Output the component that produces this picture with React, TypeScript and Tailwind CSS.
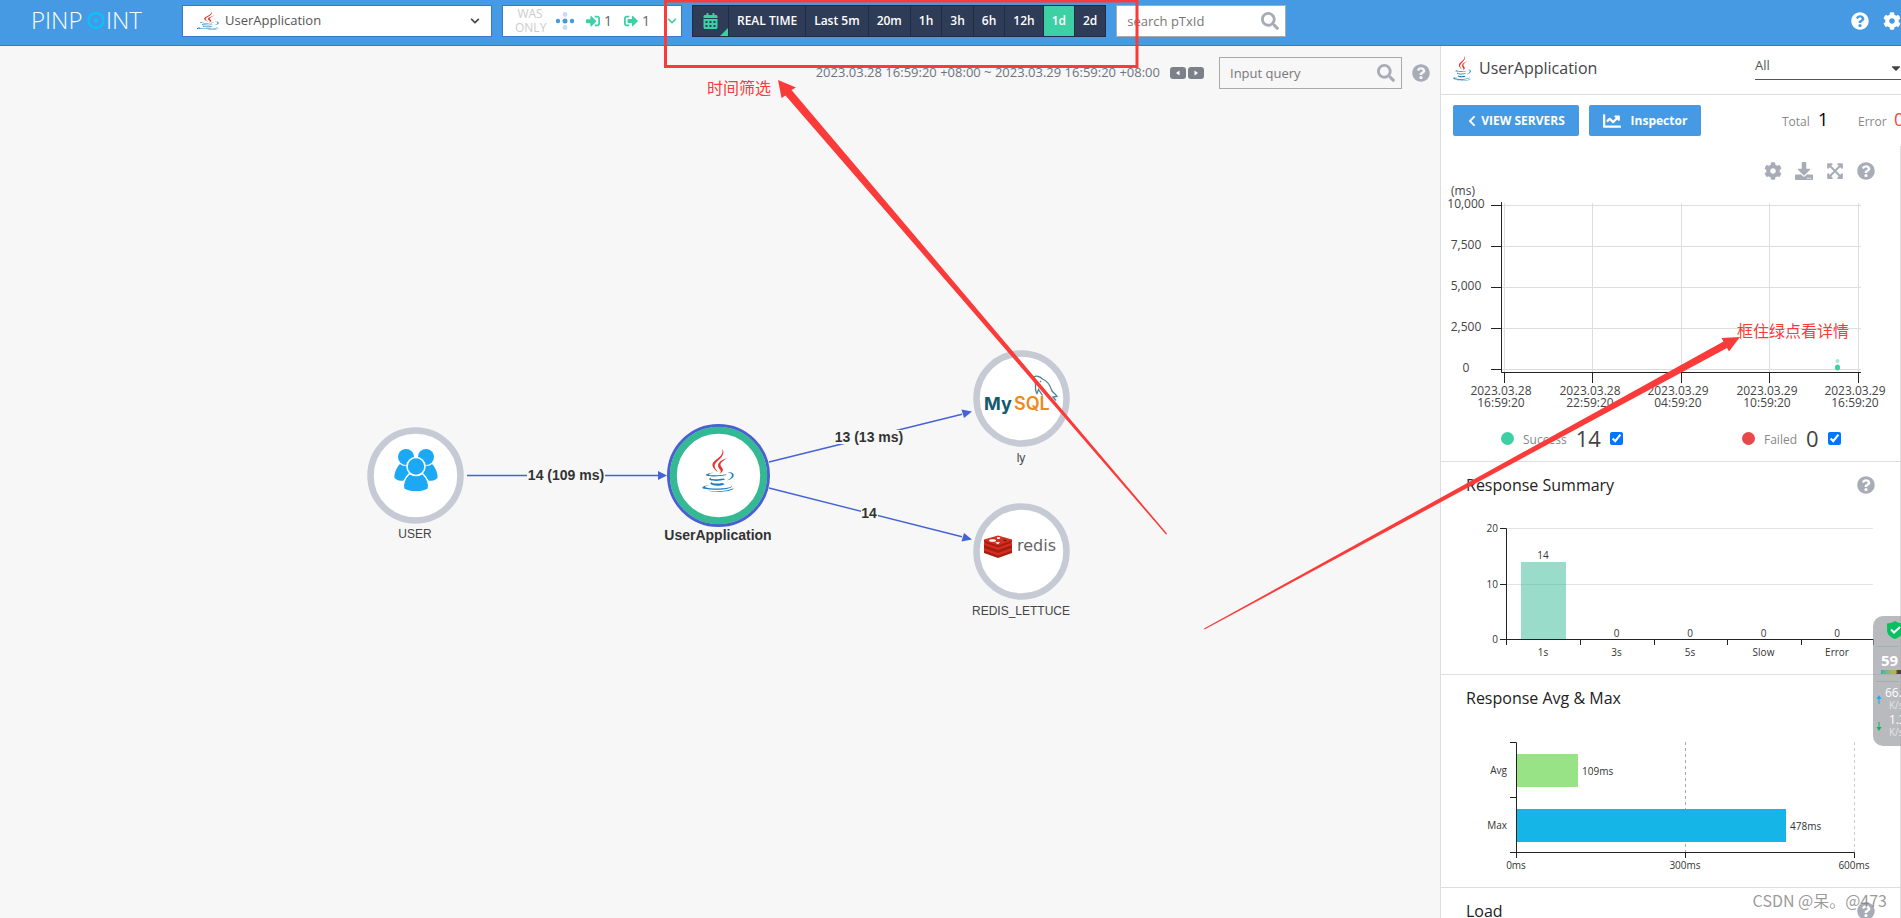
import type { ReactNode } from 'react';
import {
  FaCalendarAlt,
  FaCaretDown,
  FaChartLine,
  FaChevronDown,
  FaChevronLeft,
  FaCog,
  FaDownload,
  FaExpandArrowsAlt,
  FaQuestionCircle,
  FaSearch,
  FaSignInAlt,
  FaSignOutAlt,
} from 'react-icons/fa';

const periods = ['REAL TIME', 'Last 5m', '20m', '1h', '3h', '6h', '12h', '1d', '2d'];

const JavaPaths = () => (
  <>
    <path
      fill="#1a7fc1"
      d="M47.617 98.12s-4.767 2.774 3.397 3.71c9.892 1.13 14.947.968 25.845-1.092 0 0 2.871 1.795 6.873 3.351-24.439 10.47-55.308-.607-36.115-5.969zm-2.988-13.665s-5.348 3.959 2.823 4.805c10.567 1.091 18.91 1.18 33.354-1.6 0 0 1.993 2.025 5.132 3.131-29.542 8.64-62.446.68-41.309-6.336z"
    />
    <path
      fill="#e8322e"
      d="M69.802 61.271c6.025 6.935-1.58 13.17-1.58 13.17s15.289-7.891 8.269-17.777c-6.559-9.215-11.587-13.792 15.635-29.58 0 .001-42.731 10.67-22.324 34.187z"
    />
    <path
      fill="#1a7fc1"
      d="M102.123 108.229s3.529 2.91-3.888 5.159c-14.102 4.272-58.706 5.56-71.094.171-4.451-1.938 3.899-4.625 6.526-5.192 2.739-.593 4.303-.485 4.303-.485-4.953-3.487-32.013 6.85-13.743 9.815 49.821 8.076 90.817-3.637 77.896-9.468zM49.912 70.294s-22.686 5.389-8.033 7.348c6.188.828 18.518.638 30.011-.326 9.39-.789 18.813-2.474 18.813-2.474s-3.308 1.419-5.704 3.053c-23.042 6.061-67.544 3.238-54.731-2.958 10.832-5.239 19.644-4.643 19.644-4.643zm40.697 22.747c23.421-12.167 12.591-23.86 5.032-22.285-1.848.385-2.677.72-2.677.72s.688-1.079 2-1.543c14.953-5.255 26.451 15.503-4.823 23.725 0-.002.359-.327.468-.617z"
    />
    <path
      fill="#e8322e"
      d="M76.491 1.587S89.459 14.563 64.188 34.51c-20.266 16.006-4.621 25.13-.007 35.559-11.831-10.673-20.509-20.07-14.688-28.815C58.041 28.42 81.722 22.195 76.491 1.587z"
    />
    <path
      fill="#1a7fc1"
      d="M52.214 126.021c22.476 1.437 57-.8 57.817-11.436 0 0-1.571 4.032-18.577 7.231-19.186 3.612-42.854 3.191-56.887.874 0 .001 2.875 2.381 17.647 3.331z"
    />
  </>
);

const JavaIcon = ({ className }: { className: string }) => (
  <svg className={className} viewBox="17 1 94 126" preserveAspectRatio="none" aria-hidden="true">
    <JavaPaths />
  </svg>
);

const Logo = () => (
  <a href="#home" className="flex w-[150px] items-center" aria-label="PINPOINT">
    <svg width="130" height="40" viewBox="0 0 130 40">
      <g fill="#fff" fontFamily="'Open Sans', sans-serif" fontSize="24" fontWeight="300">
        <text x="-1" y="28">PINP</text>
        <text x="74" y="28">INT</text>
      </g>
      <circle cx="64" cy="19.5" r="7.5" fill="none" stroke="#00c8ff" strokeWidth="2" />
      <circle cx="64" cy="19.5" r="2" fill="#00c8ff" />
    </svg>
  </a>
);

const Header = () => (
  <header className="flex h-[46px] shrink-0 items-center overflow-hidden border-b border-[#3a79c9] bg-[#469ae4] pb-[3px] pl-8">
    <Logo />

    <div className="relative flex h-8 w-[310px] items-center">
      <JavaIcon className="pointer-events-none absolute left-[15px] h-[18px] w-[22px]" />
      <select
        aria-label="Application"
        className="h-8 w-full appearance-none border border-[#3a79c9] bg-white pl-[42px] text-[13px] text-[#555]"
      >
        <option>UserApplication</option>
      </select>
      <FaChevronDown className="pointer-events-none absolute right-3 h-[10px] w-[10px] text-[#444]" />
    </div>

    {/* Server map options */}
    <div className="ml-[10px] flex h-8 w-[180px] items-center border border-[#3a79c9] bg-white pl-3 text-[#666]">
      <button className="w-[30px] text-center text-xs leading-[14px] text-[#ccc]">WAS ONLY</button>
      <svg className="ml-[11px]" width="18" height="18" viewBox="0 0 18 18">
        <circle cx="2" cy="9" r="2.2" fill="#469ae4" />
        <circle cx="9" cy="9" r="2.5" fill="#469ae4" />
        <circle cx="16" cy="9" r="2.2" fill="#469ae4" />
        <circle cx="9" cy="2.5" r="2.4" fill="#c6dbfb" />
        <circle cx="9" cy="15.5" r="2.4" fill="#c6dbfb" />
      </svg>
      <FaSignInAlt className="ml-3 h-[14px] w-[14px] text-[#3ed0a5]" />
      <span className="ml-1 w-3 text-sm">1</span>
      <FaSignOutAlt className="ml-2 h-[14px] w-[14px] text-[#3ed0a5]" />
      <span className="ml-1 w-3 text-sm">1</span>
      <FaChevronDown className="mr-1 ml-auto h-[10px] w-[10px] text-[#3ed0a5]" />
    </div>

    {/* Period selector */}
    <div className="ml-[10px] flex h-8 border border-[#1f2c45] bg-[#2f3c58] text-xs font-semibold text-white">
      <button className="relative flex w-[35px] items-center justify-center" aria-label="Calendar">
        <FaCalendarAlt className="h-[16px] w-[15px] text-[#3ed0a5]" />
        <svg className="absolute right-0 bottom-0" width="8" height="8" viewBox="0 0 8 8">
          <path d="M8 0v8H0z" fill="#3ed0a5" />
        </svg>
      </button>
      {periods.map((p) => (
        <button
          key={p}
          className={`border-l border-[#1f2c45] px-2 ${p === '1d' ? 'bg-[#3ed0a5]' : ''}`}
        >
          {p}
        </button>
      ))}
    </div>

    <div className="relative ml-[10px] flex h-8 w-[170px] items-center">
      <input
        aria-label="search pTxId"
        placeholder="search pTxId"
        className="h-8 w-full border border-[#aaa] bg-white pl-[10px] text-[13px] placeholder-[#777]"
      />
      <FaSearch className="absolute right-[7px] h-[18px] w-[18px] text-[#a7acb7]" />
    </div>

    <div className="ml-auto flex items-center gap-[14px] text-white">
      <FaQuestionCircle className="h-[18px] w-[18px]" />
      <FaCog className="h-[18px] w-[18px]" />
    </div>
  </header>
);

/* Topology: USER -> UserApplication -> MySQL / Redis */
const ServerMap = () => (
  <svg width="724" height="290" viewBox="358 337 724 290" fontFamily="'Liberation Sans', Arial, sans-serif">
    <path d="M467 476.5H660M769 463L962 415.2M769 489L962 537.8" fill="none" stroke="#4663d6" strokeWidth="1.4" />
    <g fill="#4663d6">
      <path d="M667 476.5l-9-4.5v9z" />
      <path d="M972 412.5l-10.500-2 2.500 8.500z" />
      <path d="M972 540.5l-8-6.500-2.500 8.500z" />
    </g>

    <g fill="#f7f7f7">
      <rect x="527" y="468" width="78" height="16" />
      <rect x="834" y="431" width="70" height="14" />
      <rect x="861" y="506" width="17" height="14" />
    </g>
    <g fill="#333" fontSize="14" fontWeight="bold" textAnchor="middle">
      <text x="566" y="481">14 (109 ms)</text>
      <text x="869" y="443">13 (13 ms)</text>
      <text x="869" y="519">14</text>
      <text x="718" y="541">UserApplication</text>
    </g>
    <g fill="#444" fontSize="12" textAnchor="middle">
      <text x="415" y="539">USER</text>
      <text x="1021" y="463">ly</text>
      <text x="1021" y="616">REDIS_LETTUCE</text>
    </g>

    <g fill="#fff" stroke="#c5cad5" strokeWidth="6.5">
      <circle cx="415.5" cy="476.5" r="45" />
      <circle cx="1021.5" cy="399.5" r="45" />
      <circle cx="1021.5" cy="552.5" r="45" />
    </g>
    <circle cx="718.5" cy="476.5" r="50" fill="#fff" stroke="#4b5ed3" strokeWidth="3" />
    <circle cx="718.5" cy="476.5" r="45.2" fill="#fff" stroke="#34b994" strokeWidth="7" />

    {/* users */}
    <g fill="#1ba9f5">
      <circle cx="406" cy="458" r="8" />
      <circle cx="426" cy="458" r="8" />
      <path d="M400 465c-4 4-6 10-5.5 14 3 3 8 3.5 13 2l3-11-3-4c-3 1.5-5 1-7.5-1z" />
      <path d="M432 465c4 4 6 10 5.5 14-3 3-8 3.5-13 2l-3-11 3-4c3 1.5 5 1 7.5-1z" />
      <g stroke="#fff" strokeWidth="1.6">
        <path d="M409 475c-4 4-6.5 10-5.5 15 6 4 19 4 25 0 1-5-1.5-11-5.5-15z" />
        <circle cx="416" cy="467.5" r="9" />
      </g>
    </g>

    <svg x="702" y="450" width="32" height="43" viewBox="17 1 94 126">
      <JavaPaths />
    </svg>

    {/* mysql */}
    <g fontFamily="Inter, 'Open Sans', sans-serif" fontSize="18">
      <text x="984" y="411" fill="#14596d" fontWeight="700">My</text>
      <text x="1014" y="411" fill="#ee8a1d" fontWeight="600">SQL</text>
    </g>
    <path
      d="M1034 378c2-2 6-.5 8.500 2 4 1.500 7.500 6 9.500 12 2 2.500 4.500 4 5 5.500l-4 .5 3 3.500M1034 378c-1 2 1 4 1.500 7 0 4-.5 7 1.500 9.500l1.500-4 4 6M1040 382l1 1"
      fill="none"
      stroke="#4b8292"
      strokeWidth="1.3"
    />

    {/* redis */}
    <path d="M984 551v3l14 5 14-5v-3z" fill="#a41e11" />
    <path d="M984 549l14-5 14 5v2.500l-14 5-14-5z" fill="#d82c20" />
    <path d="M984 546v3l14 5 14-5v-3z" fill="#a41e11" />
    <path d="M984 544l14-5 14 5v2l-14 5-14-5z" fill="#d82c20" />
    <path d="M984 541v2.500l14 5 14-5V541z" fill="#a41e11" />
    <path d="M984 540.500l14-4 14 4v1l-14 5-14-5z" fill="#d82c20" />
    <ellipse cx="992.500" cy="541.500" rx="3.500" ry="1.300" fill="#fff" />
    <ellipse cx="998.500" cy="539" rx="1.800" ry=".9" fill="#fff" />
    <path d="M995 543.500l5-.5-2 2.200z" fill="#fff" />
    <path d="M1003 540.500l4 .7-2.500 1.300z" fill="#6d1109" />
    <text x="1017" y="552" fill="#636466" fontSize="16" fontFamily="'DejaVu Sans', sans-serif">
      redis
    </text>
  </svg>
);

const MapArea = () => (
  <main className="flex min-w-0 flex-1 flex-col">
    <div className="flex h-[54px] shrink-0 items-center justify-end pr-[10px] text-[#7c8089]">
      <span className="text-[13px] font-medium text-[#6f737c]">
        2023.03.28 16:59:20 +08:00 ~ 2023.03.29 16:59:20 +08:00
      </span>
      <button className="ml-[10px]" aria-label="Previous period">
        <svg className="block" width="16" height="12" viewBox="0 0 16 12">
          <rect width="16" height="12" rx="3" fill="#7c8089" />
          <path d="M9.500 3.500v5L6 6z" fill="#fff" />
        </svg>
      </button>
      <button className="ml-[2px]" aria-label="Next period">
        <svg className="block" width="16" height="12" viewBox="0 0 16 12">
          <rect width="16" height="12" rx="3" fill="#7c8089" />
          <path d="M6.500 3.500v5L10 6z" fill="#fff" />
        </svg>
      </button>
      <div className="relative ml-[15px] flex h-8 w-[183px] items-center">
        <input
          aria-label="Input query"
          placeholder="Input query"
          className="h-8 w-full border border-[#aaa] pl-[10px] text-[13px] placeholder-[#777]"
        />
        <FaSearch className="absolute right-[7px] h-[18px] w-[18px] text-[#a7acb7]" />
      </div>
      <FaQuestionCircle className="ml-[10px] h-[18px] w-[18px] text-[#a7acb7]" />
    </div>
    <div className="flex flex-1 items-center justify-center pb-14">
      <ServerMap />
    </div>
  </main>
);

const scatterX = [
  { x: 63.5, label: 60, day: '2023.03.28', time: '16:59:20' },
  { x: 151.5, label: 149, day: '2023.03.28', time: '22:59:20' },
  { x: 240.5, label: 237, day: '2023.03.29', time: '04:59:20' },
  { x: 328.5, label: 326, day: '2023.03.29', time: '10:59:20' },
  { x: 417.5, label: 414, day: '2023.03.29', time: '16:59:20' },
];
const scatterY = ['10,000', '7,500', '5,000', '2,500', '0'];

const ScatterChart = () => (
  <svg className="block" width="459" height="235" viewBox="0 0 459 235" fontSize="12" fill="#444" textAnchor="middle">
    <text x="22" y="15">(ms)</text>
    {scatterY.map((v, i) => (
      <g key={v}>
        <path d={`M61 ${25.5 + i * 41}H420`} stroke="#ddd" />
        <path d={`M50 ${25.5 + i * 41}H60`} stroke="#222" />
        <text x="25" y={28 + i * 41}>{v}</text>
      </g>
    ))}
    {scatterX.map((t) => (
      <g key={t.x}>
        <path d={`M${t.x} 23V192`} stroke="#ddd" />
        <path d={`M${t.x} 193V203`} stroke="#222" />
        <text x={t.label} y="215">{t.day}</text>
        <text x={t.label} y="227">{t.time}</text>
      </g>
    ))}
    <path d="M60.5 22V192.5H420" fill="none" stroke="#222" />
    <circle cx="396.5" cy="181" r="2" fill="#a9e8d4" />
    <ellipse cx="396.5" cy="187.5" rx="2.5" ry="3" fill="#3ed0a5" />
  </svg>
);

const summary = [
  { name: '1s', value: 14 },
  { name: '3s', value: 0 },
  { name: '5s', value: 0 },
  { name: 'Slow', value: 0 },
  { name: 'Error', value: 0 },
];

const SummaryChart = () => (
  <svg className="block" width="459" height="166" viewBox="0 0 459 166" fontSize="10" fill="#333">
    <path d="M66 20.5H432M66 76.5H432" stroke="#e0e4e2" />
    <rect x="80" y="54" width="45" height="77" fill="#34b994" fillOpacity=".5" />
    <path
      d="M59 20.5H65.5V131.5H432.5V137M59 76.5H65M59 131.5H65M65.5 131V137M139.5 131V137M213.5 131V137M286.5 131V137M360.5 131V137"
      fill="none"
      stroke="#222"
    />
    <g textAnchor="end">
      <text x="57" y="24">20</text>
      <text x="57" y="80">10</text>
      <text x="57" y="135">0</text>
    </g>
    <g textAnchor="middle">
      {summary.map((s, i) => (
        <g key={s.name}>
          <text x={102 + i * 73.5} y={s.value ? 51 : 129}>{s.value}</text>
          <text x={102 + i * 73.5} y="148">{s.name}</text>
        </g>
      ))}
    </g>
  </svg>
);

const AvgMaxChart = () => (
  <svg className="block" width="459" height="166" viewBox="0 0 459 166" fontSize="10" fill="#333">
    <path d="M244.5 21V131" stroke="#aaa" strokeDasharray="3 3" />
    <path d="M413.5 21V131" stroke="#ccc" strokeDasharray="3 3" />
    <rect x="76" y="33" width="61" height="33" fill="#98e386" />
    <rect x="76" y="88" width="269" height="33" fill="#15b5e8" />
    <path
      d="M69 21.5H75.5V137M69 76.5H75M69 131.5H413.5V137M244.5 131V137"
      fill="none"
      stroke="#222"
    />
    <text x="141" y="54">109ms</text>
    <text x="349" y="109">478ms</text>
    <g textAnchor="end">
      <text x="66" y="53">Avg</text>
      <text x="66" y="108">Max</text>
    </g>
    <g textAnchor="middle">
      <text x="75" y="148">0ms</text>
      <text x="244" y="148">300ms</text>
      <text x="413" y="148">600ms</text>
    </g>
  </svg>
);

const SectionTitle = ({ children, help = true }: { children: ReactNode; help?: boolean }) => (
  <div className="flex h-[46px] items-center justify-between pr-[25px] pl-[25px]">
    <h2 className="text-base font-medium text-[#222]">{children}</h2>
    {help && <FaQuestionCircle className="h-[18px] w-[18px] text-[#a7acb7]" />}
  </div>
);

const Sidebar = () => (
  <aside className="w-[461px] shrink-0 overflow-hidden border-l border-[#ddd] bg-white">
    <div className="flex h-[49px] w-[485px] items-center border-b border-[#ddd] pb-1 pl-3">
      <JavaIcon className="h-[25px] w-[18px]" />
      <span className="ml-2 text-base font-medium text-[#444]">UserApplication</span>
      <div className="relative ml-auto flex w-[171px] items-center">
        <select aria-label="Agent" className="h-6 w-full appearance-none border-b border-[#555] pb-1 text-[13px] text-[#555]">
          <option>All</option>
        </select>
        <FaCaretDown className="pointer-events-none absolute left-[135px] h-[14px] w-[12px] text-[#444]" />
      </div>
    </div>

    <div className="flex h-[51px] w-[485px] items-center pl-3 text-white">
      <button className="flex h-[31px] w-[126px] items-center justify-center gap-1 rounded-[2px] bg-[#469ae4] text-xs font-bold">
        <FaChevronLeft className="h-3 w-[10px]" />
        VIEW SERVERS
      </button>
      <button className="ml-[10px] flex h-[31px] w-[112px] items-center justify-center gap-[10px] rounded-[2px] bg-[#469ae4] text-xs font-bold">
        <FaChartLine className="h-[18px] w-[18px]" />
        Inspector
      </button>
      <div className="ml-auto flex w-[144px] items-baseline pb-1 text-xs text-[#888]">
        <span className="w-[36px]">Total</span>
        <span className="w-[40px] text-lg leading-6 text-black">1</span>
        <span className="w-[36px]">Error</span>
        <span className="text-lg leading-6 text-[#e9474a]">0</span>
      </div>
    </div>

    <section className="border-r border-b border-[#ddd]">
      <div className="flex justify-end gap-[13px] pt-4 pr-[25px] text-[#a7acb7]">
        <FaCog className="h-[18px] w-[18px]" />
        <FaDownload className="h-[18px] w-[18px]" />
        <FaExpandArrowsAlt className="h-[18px] w-[18px]" />
        <FaQuestionCircle className="h-[18px] w-[18px]" />
      </div>
      <ScatterChart />
      <div className="flex h-[46px] pl-[60px] text-[#444]">
        <label className="flex w-[241px] items-center">
          <span className="h-[13px] w-[13px] rounded-full bg-[#3ed0a5]" />
          <span className="mt-1 ml-[9px] text-xs text-[#888]">Success</span>
          <span className="ml-[9px] text-[22px] leading-6">14</span>
          <input type="checkbox" defaultChecked className="ml-[9px] h-[13px] w-[13px]" />
        </label>
        <label className="flex items-center">
          <span className="h-[13px] w-[13px] rounded-full bg-[#e9474a]" />
          <span className="mt-1 ml-[9px] text-xs text-[#888]">Failed</span>
          <span className="ml-[9px] text-[22px] leading-6">0</span>
          <input type="checkbox" defaultChecked className="ml-[9px] h-[13px] w-[13px]" />
        </label>
      </div>
    </section>

    <section className="border-r border-b border-[#ddd]">
      <SectionTitle>Response Summary</SectionTitle>
      <SummaryChart />
    </section>

    <section className="border-r border-b border-[#ddd]">
      <SectionTitle help={false}>Response Avg &amp; Max</SectionTitle>
      <AvgMaxChart />
    </section>

    <section className="border-r border-[#ddd]">
      <SectionTitle>Load</SectionTitle>
    </section>
  </aside>
);

/* Desktop speed monitor docked to the right edge */
const SpeedMonitor = () => (
  <div className="absolute top-[616px] right-0 h-[130px] w-7 overflow-hidden rounded-l-[10px] bg-[#9a9ca2]/70 text-white">
    <svg className="mt-[5px] ml-[14px]" width="16" height="18" viewBox="0 0 16 18">
      <path d="M8 0c2 1.500 5 2.500 8 2.500V9c0 5-4 7.500-8 9-4-1.500-8-4-8-9V2.500C3 2.500 6 1.500 8 0z" fill="#07c160" />
      <path d="M4 8.500l3 3L13 6" fill="none" stroke="#fff" strokeWidth="2" />
    </svg>
    <div className="mx-[3px] mt-[7px] border-t border-[#a3b0b2] pl-[5px]">
      <div className="h-[23px] text-[15px] leading-[26px] font-bold">59</div>
      <div className="h-1 w-6 bg-linear-to-r from-[#28b5ad] via-[#c3b32a] via-60% to-[#444] to-70%" />
    </div>
    <div className="mx-[3px] mt-[7px] flex h-7 gap-[3px] border-t border-[#a9abb0]">
      <svg className="mt-[13px] shrink-0" width="6" height="9" viewBox="0 0 6 9">
        <path d="M3 0l2.500 4h-2v5h-1V4h-2z" fill="#1ba9f5" />
      </svg>
      <div className="mt-[5px] text-xs leading-3">
        66.2
        <div className="pl-1 text-[10px] leading-3 text-[#e3e4e6]">K/s</div>
      </div>
    </div>
    <div className="mx-[3px] flex h-7 gap-[7px]">
      <svg className="mt-[13px] shrink-0" width="6" height="9" viewBox="0 0 6 9">
        <path d="M3 9l2.500-4h-2V0h-1v5h-2z" fill="#07b858" />
      </svg>
      <div className="mt-[5px] text-xs leading-3">
        1.3
        <div className="text-[10px] leading-3 text-[#e3e4e6]">K/s</div>
      </div>
    </div>
  </div>
);

/* Red notes drawn on top of the page */
const Annotations = () => (
  <svg
    className="pointer-events-none absolute inset-0 h-full w-full"
    fill="#fb3b3a"
    fontFamily="'Noto Sans CJK SC', sans-serif"
  >
    <rect x="665.5" y="1" width="471.5" height="65.5" fill="none" stroke="#fb3b3a" strokeWidth="3" />
    <path d="M778 80l18 7.500-4.500 2.500L1167 533.500l-1 1L785.500 95.500l-4 2.500z" />
    <path d="M1740 337l-11 14.500-2-3.500L1204.500 629.500l-.5-1L1723.500 341.500l-2-3.500z" />
    <text x="707" y="94" fontSize="16">时间筛选</text>
    <text x="1737" y="337" fontSize="16">框住绿点看详情</text>
  </svg>
);

const App = () => {
  return (
    <div className="relative flex h-screen flex-col overflow-hidden bg-[#f7f7f7] font-['Open_Sans','Noto_Sans_CJK_SC',sans-serif]">
      <Header />
      <div className="flex min-h-0 flex-1">
        <MapArea />
        <Sidebar />
      </div>
      <SpeedMonitor />
      <Annotations />
      <p className="absolute right-[14px] bottom-[6px] font-['Noto_Sans_CJK_SC',sans-serif] text-base text-[#808080]/80">
        CSDN @呆。@473
      </p>
    </div>
  );
};

export default App;
